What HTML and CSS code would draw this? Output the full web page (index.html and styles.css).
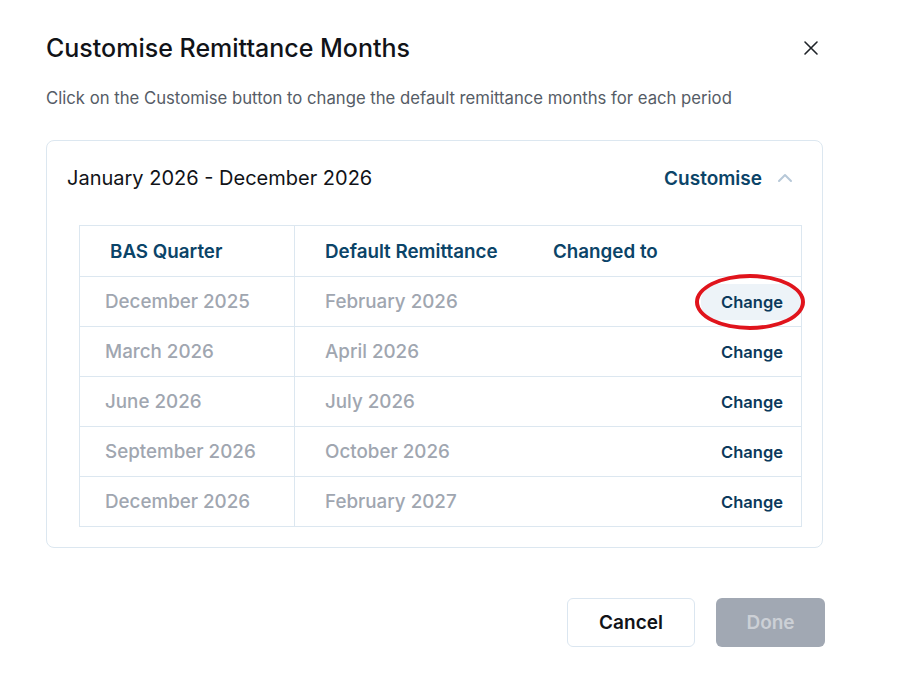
FILE: index.html
```html
<!DOCTYPE html>
<html lang="en">
  <head>
    <meta charset="UTF-8" />
    <meta name="viewport" content="width=device-width, initial-scale=1.0" />
    <title>Customise Remittance Months</title>
    <link rel="stylesheet" href="styles.css">
  </head>
  <body>
    <div class="modal">
      <div class="modal-head">
        <h1 class="modal-title">Customise Remittance Months</h1>
        <button type="button" class="close-btn" aria-label="Close">
          <svg width="16" height="16" viewBox="0 0 16 16">
            <path d="M2 2 L14 14 M14 2 L2 14" stroke="#1f2328" stroke-width="1.6" stroke-linecap="round" />
          </svg>
        </button>
      </div>
      <p class="modal-sub">Click on the Customise button to change the default remittance months for each period</p>

      <div class="period">
        <div class="period-head">
          <div class="period-name">January 2026 - December 2026</div>
          <button type="button" class="customise-btn">
            Customise
            <svg width="18" height="12" viewBox="0 0 18 12">
              <path d="M3 9 L9 3 L15 9" fill="none" stroke="#b7c8d8" stroke-width="2" stroke-linecap="round" stroke-linejoin="round" />
            </svg>
          </button>
        </div>

        <div class="months">
          <div class="row head">
            <div class="cell quarter">BAS Quarter</div>
            <div class="cell remit">Default Remittance</div>
            <div class="cell changed">Changed to</div>
            <div class="cell action"></div>
          </div>
          <div class="row">
            <div class="cell quarter">December 2025</div>
            <div class="cell remit">February 2026</div>
            <div class="cell changed"></div>
            <div class="cell action">
              <button type="button" class="change-btn active">Change</button>
              <span class="mark"></span>
            </div>
          </div>
          <div class="row">
            <div class="cell quarter">March 2026</div>
            <div class="cell remit">April 2026</div>
            <div class="cell changed"></div>
            <div class="cell action"><button type="button" class="change-btn">Change</button></div>
          </div>
          <div class="row">
            <div class="cell quarter">June 2026</div>
            <div class="cell remit">July 2026</div>
            <div class="cell changed"></div>
            <div class="cell action"><button type="button" class="change-btn">Change</button></div>
          </div>
          <div class="row">
            <div class="cell quarter">September 2026</div>
            <div class="cell remit">October 2026</div>
            <div class="cell changed"></div>
            <div class="cell action"><button type="button" class="change-btn">Change</button></div>
          </div>
          <div class="row">
            <div class="cell quarter">December 2026</div>
            <div class="cell remit">February 2027</div>
            <div class="cell changed"></div>
            <div class="cell action"><button type="button" class="change-btn">Change</button></div>
          </div>
        </div>
      </div>

      <div class="modal-foot">
        <button type="button" class="btn cancel">Cancel</button>
        <button type="button" class="btn done" disabled>Done</button>
      </div>
    </div>
  </body>
</html>
```

FILE: styles.css
```css
body {
  margin: 0;
  background-color: #ffffff;
  font-family: Inter, "Noto Sans", sans-serif;
  color: #15171c;
}
.modal {
  width: 780px;
  padding: 30px 0 0 46px;
}
.modal-head {
  display: flex;
  justify-content: space-between;
  align-items: center;
  width: 777px;
}
.modal-title {
  margin: 0;
  font-size: 25px;
  font-weight: 500;
  line-height: 36px;
  color: #111318;
}
.close-btn {
  background: none;
  border: none;
  padding: 0;
  width: 16px;
  height: 16px;
  margin-right: 4px;
  cursor: pointer;
}
.modal-sub {
  margin: 21px 0 0;
  font-size: 16.7px;
  line-height: 22px;
  color: #555c66;
}
.period {
  width: 777px;
  margin-top: 31px;
  border: 1px solid #dce7f0;
  border-radius: 8px;
  box-sizing: border-box;
  padding: 0 20px 20px 32px;
}
.period-head {
  display: flex;
  justify-content: space-between;
  align-items: center;
  height: 74px;
  margin-left: -12px;
  padding-bottom: 10px;
}
.period-name {
  font-size: 20px;
  font-weight: 400;
  color: #111318;
}
.customise-btn {
  display: flex;
  align-items: center;
  gap: 14px;
  background: none;
  border: none;
  padding: 0 8px 0 0;
  font-family: inherit;
  font-size: 19px;
  font-weight: 600;
  color: #0b4468;
  cursor: pointer;
}
.months {
  border: 1px solid #dce7f0;
}
.row {
  display: flex;
  height: 50px;
  align-items: stretch;
  border-top: 1px solid #dce7f0;
  box-sizing: border-box;
}
.row.head {
  border-top: none;
  height: 50px;
}
.cell {
  display: flex;
  align-items: center;
  font-size: 18.8px;
  font-weight: 500;
  color: #a0a6b0;
}
.cell.quarter {
  width: 215px;
  padding-left: 25px;
  box-sizing: border-box;
  border-right: 1px solid #dce7f0;
}
.cell.remit {
  width: 228px;
  padding-left: 30px;
}
.cell.changed {
  flex: 1;
}
.cell.action {
  position: relative;
  width: 120px;
  justify-content: flex-end;
  padding-right: 0;
}
.row.head .cell {
  color: #0b4468;
  font-weight: 600;
}
.row.head .cell.quarter {
  padding-left: 30px;
}
.change-btn {
  background: none;
  border: none;
  border-radius: 16px;
  padding: 8px 18px 8px 20px;
  font-family: inherit;
  font-size: 16.5px;
  font-weight: 600;
  color: #0b3a5c;
  cursor: pointer;
}
.change-btn.active {
  background-color: #edf3f8;
}
.mark {
  position: absolute;
  left: 14px;
  top: -3px;
  width: 102px;
  height: 48px;
  border: 4px solid #e0141c;
  border-radius: 50%;
  pointer-events: none;
}
.modal-foot {
  display: flex;
  justify-content: flex-end;
  gap: 21px;
  width: 779px;
  margin-top: 50px;
}
.btn {
  height: 49px;
  border-radius: 6px;
  font-family: inherit;
  font-size: 19px;
  font-weight: 600;
  cursor: pointer;
}
.btn.cancel {
  width: 128px;
  background-color: #ffffff;
  border: 1.5px solid #dbe6f0;
  color: #111318;
}
.btn.done {
  width: 109px;
  border: none;
  background-color: #a1a8b3;
  color: #ccd0d6;
  cursor: default;
}
```
